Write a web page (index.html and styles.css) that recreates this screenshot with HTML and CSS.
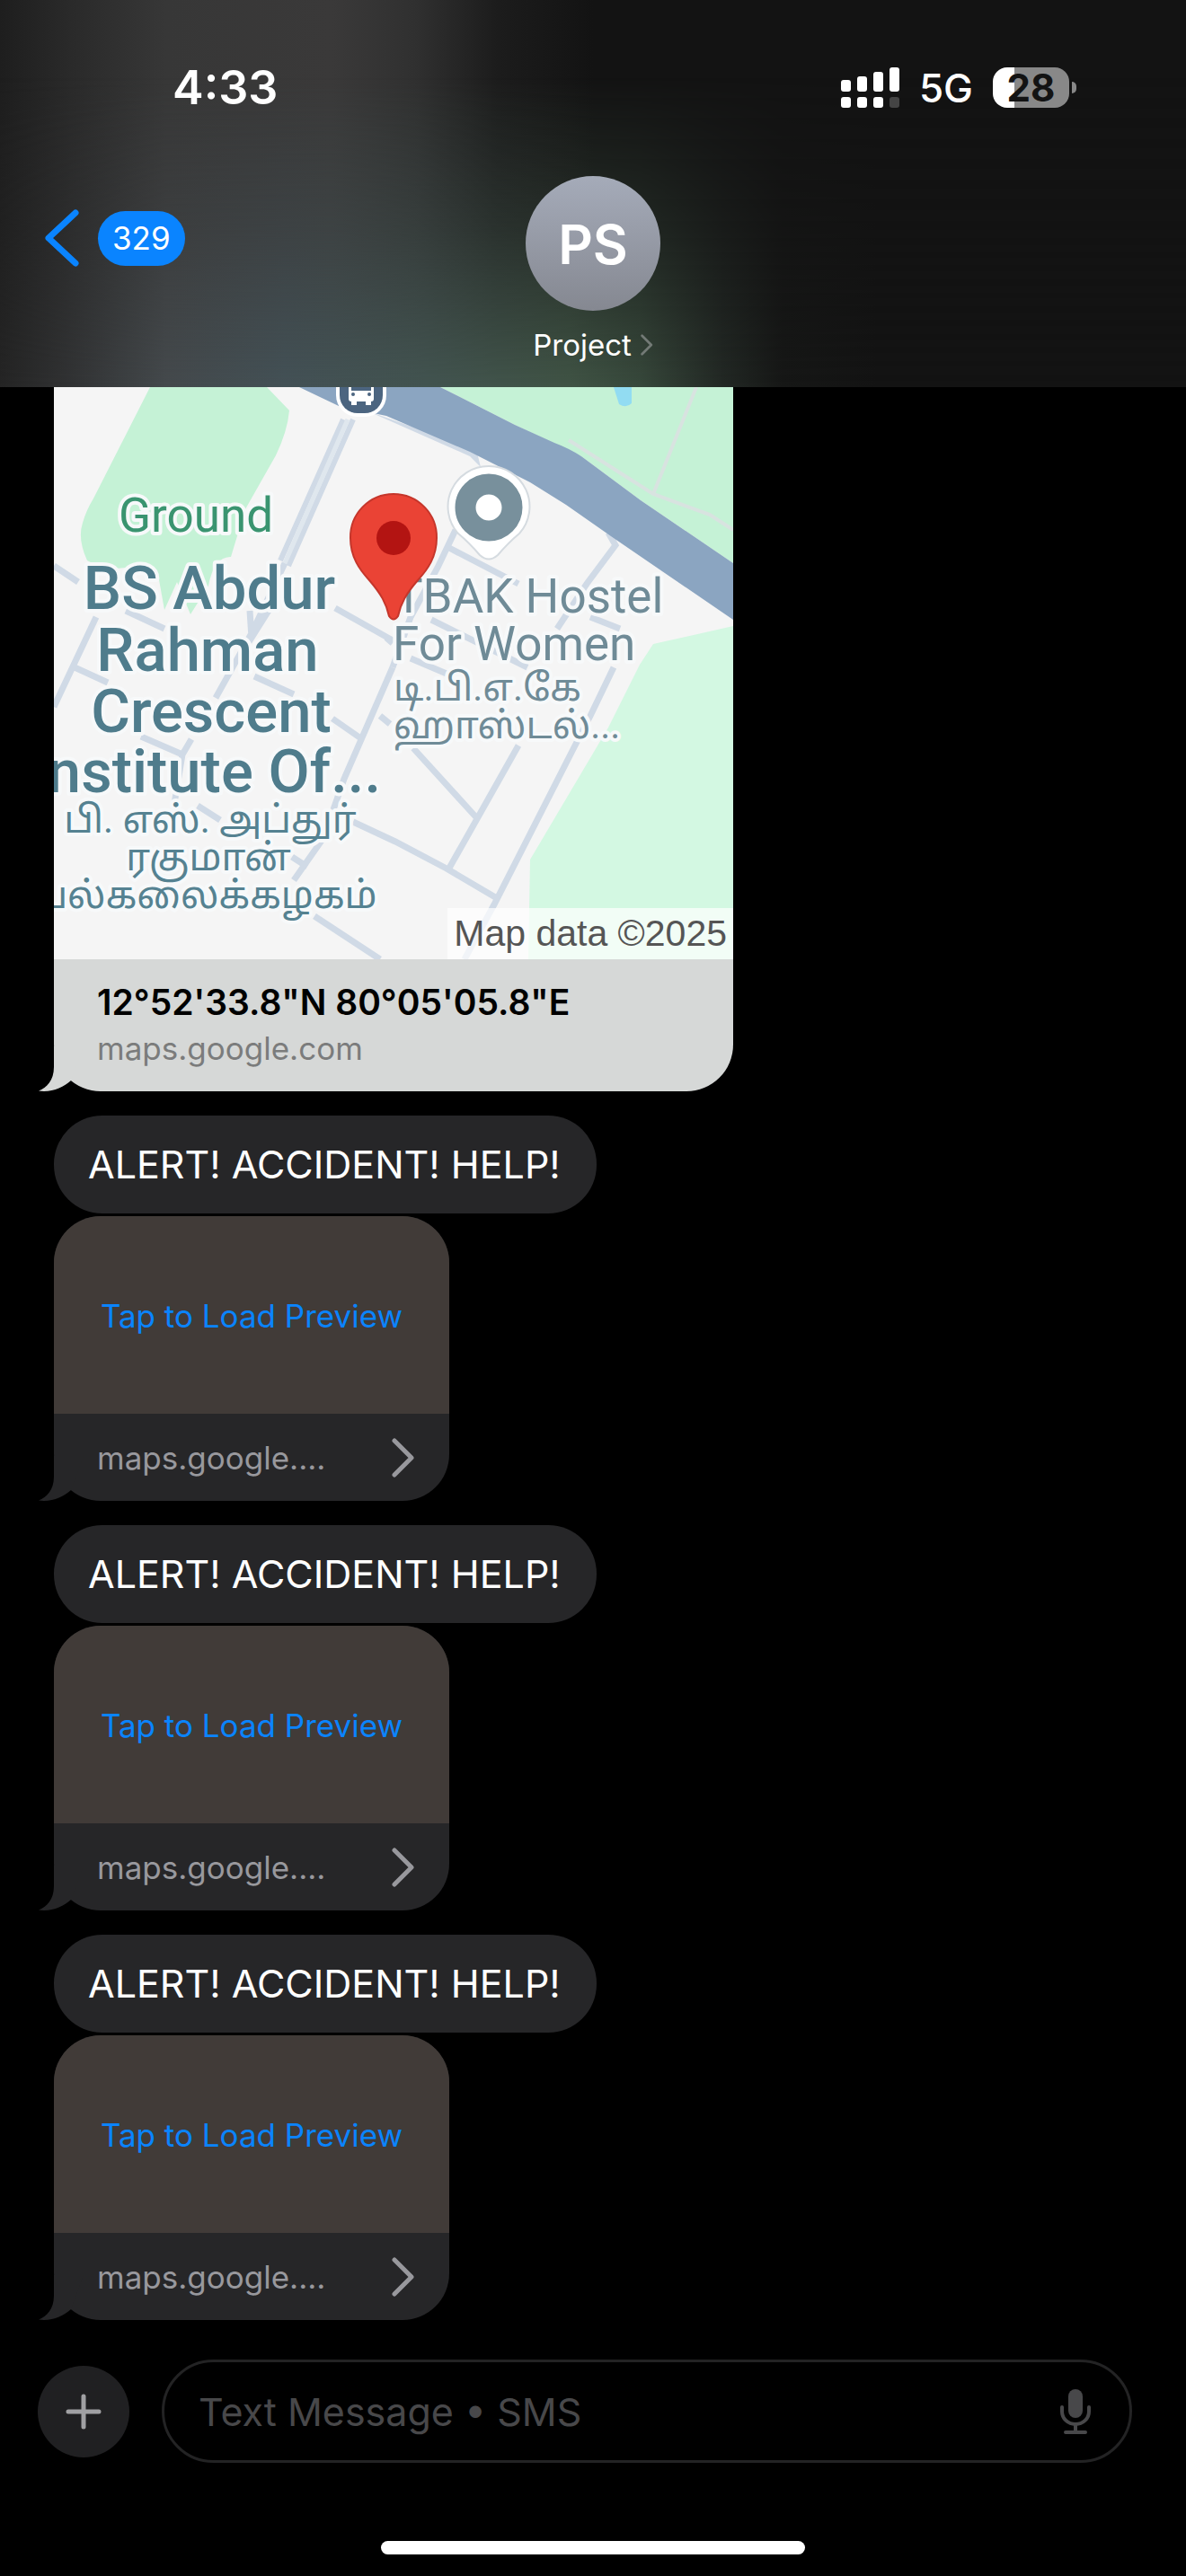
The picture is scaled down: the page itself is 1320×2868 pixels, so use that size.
FILE: index.html
```html
<!DOCTYPE html>
<html lang="en">
<head>
<meta charset="utf-8">
<meta name="viewport" content="width=device-width, initial-scale=1">
<title>Messages – Project</title>
<link rel="stylesheet" href="styles.css">
</head>
<body>
<svg class="defs" aria-hidden="true">
  <symbol id="tail" viewBox="0 0 50 50">
    <path d="M17 0V23C17 38 9 46 0 49.6C15 51.500 27 46 36 38L50 0Z"/>
  </symbol>
  <symbol id="chevron" viewBox="0 0 26 44">
    <path d="M3 3L22 22L3 41" fill="none" stroke="currentColor" stroke-width="5" stroke-linecap="round" stroke-linejoin="round"/>
  </symbol>
</svg>

<header class="top">
  <div class="status">
    <time class="clock">4:33</time>
    <div class="status-icons">
      <svg class="signal" viewBox="0 0 65 45" role="img" aria-label="Signal">
        <g fill="#fff">
          <rect x="0" y="14" width="11" height="13" rx="3"/>
          <rect x="18" y="10" width="11" height="17" rx="3"/>
          <rect x="36" y="5" width="11" height="22" rx="3"/>
          <rect x="54" y="0" width="11" height="27" rx="3"/>
          <rect x="0" y="33" width="11" height="12" rx="3"/>
          <rect x="18" y="33" width="11" height="12" rx="3"/>
          <rect x="36" y="33" width="11" height="12" rx="3"/>
        </g>
        <rect x="54" y="33" width="11" height="12" rx="3" fill="#444"/>
      </svg>
      <span class="network">5G</span>
      <div class="battery"><span class="battery-level">28</span></div>
    </div>
  </div>
  <nav class="nav">
    <button class="back" type="button" aria-label="Back, 329 unread">
      <svg class="back-arrow" viewBox="0 0 38 64"><path d="M34 4L4 32L34 60" fill="none" stroke="#0a84ff" stroke-width="7" stroke-linecap="round" stroke-linejoin="round"/></svg>
      <span class="badge">329</span>
    </button>
    <button class="contact" type="button">
      <span class="avatar">PS</span>
      <span class="contact-name">Project
        <svg class="name-arrow"><use href="#chevron"/></svg>
      </span>
    </button>
  </nav>
</header>

<main class="thread">
  <div class="message">
    <a class="card map-card" href="#map">
      <svg class="map" viewBox="60 431 756 637" role="img" aria-label="Map">
        <rect x="60" y="431" width="756" height="637" fill="#f5f5f5"/>
        <path fill="#c5f2d6" d="M167 431H297L322 457Q320 480 307 507L273 567L257 620Q238 620 232 652L212 684L197 648L183 679L176 640L150 630Q120 638 97 624Q86 600 92 582Q96 568 104 555Z"/>
        <path fill="#c5f2d6" d="M490 431H816V627L713 557L647 508L573 473Z"/>
        <path fill="#d3f8e2" d="M816 697L727 717L712 740L677 810L590 957L588 1068H816Z"/>
        <path fill="#92dcf2" d="M683 431H703V449Q697 455 689 450Z"/>
        <g fill="none" stroke="#d8e3e0" stroke-width="4">
          <path d="M775 431L727 550M633 490L680 520L727 550L790 573L816 590"/>
        </g>
        <g fill="none" stroke="#d0dae6" stroke-width="7">
          <path d="M382 467L312 624M393 467L321 630" stroke-width="6"/>
          <path d="M387 467L317 627" stroke="#dfe7ee" stroke-width="5"/>
          <path d="M317 627L280 705L240 777M278 680L280 710L304 672M213 823L203 840L157 820M203 840L194 895"/>
          <path d="M60 630L87 648M140 680L183 700M107 687L60 787M83 743L120 760M283 753L327 773M370 800L403 823"/>
          <path d="M373 677L437 713M437 743L383 867L360 933L327 980M325 954L342 965M423 797L434 806"/>
          <path d="M220 897L245 913M393 915L440 937L497 967L553 1000M350 1020L423 1068"/>
          <path d="M507 590L487 632L457 687L437 743M500 610L577 650M677 593L685 607L653 650L620 700"/>
          <path d="M480 690L587 743M457 733L497 750M430 710L437 716M657 687L690 700"/>
          <path d="M683 743L657 797L640 830L550 1007L517 1068M577 830L498 970M460 833L530 910"/>
        </g>
        <path fill="#d0dae6" d="M410 458L523 508L535 520L530 500ZM622 556L677 593L686 604V590Z"/>
        <path fill="#8ba5c1" d="M333 431H490L573 473L617 493Q633 499 647 508L713 557L816 627V690L680 597L630 562L590 537L523 503L430 463L377 452Z"/>

        <rect x="374" y="402" width="56" height="62" rx="24" fill="#fff"/>
        <rect x="378" y="402" width="48" height="58" rx="20" fill="#4c6580"/>
        <path fill="#fff" d="M388 423H416V444Q416 447 413 447V451H407V447H397V451H391V447Q388 447 388 444Z"/>
        <path fill="#4c6580" d="M391 427H413V435H391Z"/>
        <circle cx="393" cy="439" r="2" fill="#4c6580"/><circle cx="411" cy="439" r="2" fill="#4c6580"/>

        <path fill="#fff" stroke="#d5dbe0" stroke-width="2" d="M544 519A45 45 0 0 1 578 594Q566 604 554 618Q544 627 534 618Q522 604 510 594A45 45 0 0 1 544 519Z"/>
        <circle cx="544" cy="565" r="26" fill="none" stroke="#78909c" stroke-width="23"/>

        <g class="label place">
          <text x="439" y="682">TBAK Hostel</text>
          <text x="437" y="735">For Women</text>
          <text class="tamil" x="438" y="780">டி.பி.எ.கே</text>
          <text class="tamil" x="438" y="822">ஹாஸ்டல்...</text>
        </g>
        <text class="label ground" x="218" y="592">Ground</text>
        <g class="label campus">
          <text x="233" y="678">BS Abdur</text>
          <text x="231" y="747">Rahman</text>
          <text x="235" y="815">Crescent</text>
          <text x="229" y="882">Institute Of...</text>
        </g>
        <g class="label campus-local">
          <text x="234" y="927">பி. எஸ். அப்துர்</text>
          <text x="232" y="969">ரகுமான்</text>
          <text x="231" y="1011">பல்கலைக்கழகம்</text>
        </g>
        <path fill="#ea4335" stroke="#c5362b" stroke-width="2" d="M438 550A48 48 0 0 1 486 599C486 620 476 634 465 646C452 661 446 672 443 686Q438 693 433 686C430 672 424 661 411 646C400 634 390 620 390 599A48 48 0 0 1 438 550Z"/>
        <circle cx="438" cy="599" r="19" fill="#b31412"/>
        <rect x="498" y="1011" width="318" height="57" fill="#fff" opacity=".7"/>
        <text class="credit" x="809" y="1053">Map data ©2025</text>
      </svg>
      <span class="map-caption">
        <strong class="map-title">12°52'33.8"N 80°05'05.8"E</strong>
        <span class="map-host">maps.google.com</span>
      </span>
    </a>
    <svg class="tail tail-light"><use href="#tail"/></svg>
  </div>

  <section class="group">
    <p class="bubble">ALERT! ACCIDENT! HELP!</p>
    <div class="message">
      <div class="card link-card">
        <button class="load" type="button">Tap to Load Preview</button>
        <a class="link" href="#location-1">maps.google....<svg class="link-arrow"><use href="#chevron"/></svg></a>
      </div>
      <svg class="tail"><use href="#tail"/></svg>
    </div>
  </section>

  <section class="group">
    <p class="bubble">ALERT! ACCIDENT! HELP!</p>
    <div class="message">
      <div class="card link-card">
        <button class="load" type="button">Tap to Load Preview</button>
        <a class="link" href="#location-2">maps.google....<svg class="link-arrow"><use href="#chevron"/></svg></a>
      </div>
      <svg class="tail"><use href="#tail"/></svg>
    </div>
  </section>

  <section class="group">
    <p class="bubble">ALERT! ACCIDENT! HELP!</p>
    <div class="message">
      <div class="card link-card">
        <button class="load" type="button">Tap to Load Preview</button>
        <a class="link" href="#location-3">maps.google....<svg class="link-arrow"><use href="#chevron"/></svg></a>
      </div>
      <svg class="tail"><use href="#tail"/></svg>
    </div>
  </section>
</main>

<footer class="bottom">
  <form class="composer">
    <button class="add" type="button" aria-label="Add attachment">
      <svg class="plus" viewBox="0 0 40 40"><path d="M20 3V37M3 20H37" stroke="#a0a0a3" stroke-width="5" stroke-linecap="round"/></svg>
    </button>
    <div class="field">
      <input class="field-input" type="text" placeholder="Text Message • SMS" aria-label="Text Message">
      <button class="dictate" type="button" aria-label="Dictate">
        <svg class="mic" viewBox="0 0 36 50"><rect x="10" y="0" width="16" height="32" rx="8" fill="#48484a"/><path d="M3 20V25A15 14 0 0 0 33 25V20M18 39V47M7 48H29" fill="none" stroke="#48484a" stroke-width="4" stroke-linecap="round"/></svg>
      </button>
    </div>
  </form>
  <div class="home-bar"></div>
</footer>
</body>
</html>
```
FILE: styles.css
```css
* {
  box-sizing: border-box;
}

body {
  margin: 0;
  min-height: 100vh;
  display: flex;
  flex-direction: column;
  background: #000;
  color: #fff;
  font-family: Inter, "Liberation Sans", sans-serif;
  overflow-x: hidden;
}

button,
input {
  font: inherit;
  color: inherit;
  background: none;
  border: 0;
  margin: 0;
  padding: 0;
}

a {
  color: inherit;
  text-decoration: none;
}

.defs {
  position: absolute;
  width: 0;
  height: 0;
}

.top {
  position: relative;
  isolation: isolate;
  padding-bottom: 27px;
  background: linear-gradient(to right, #1e1e1e 0, #2a2a2a 6%, #373737 14%, #3a3939 28%, #303030 35%, #1c1c1c 42%, #131313 50%);
}

.top::before {
  content: "";
  position: absolute;
  inset: 0;
  z-index: -1;
  background: linear-gradient(to right, #242424 0, #2f3031 5%, #44494c 14%, #435156 24%, #425450 36%, #405445 48%, #37483b 54%, #222824 61%, #161716 66%, #131313 74%);
  mask-image: linear-gradient(to bottom, transparent 20%, rgb(0 0 0 / 40%) 60%, #000);
}

.status {
  display: flex;
  justify-content: space-between;
  align-items: center;
  height: 194px;
  padding: 0 122px 0 192px;
}

.clock {
  font-size: 52px;
  font-weight: 600;
}

.status-icons {
  display: flex;
  align-items: center;
}

.signal {
  width: 65px;
  height: 45px;
}

.network {
  margin: 2px 22px 0 22px;
  font-size: 44px;
  font-weight: 500;
}

.battery {
  position: relative;
  margin-right: 8px;
}

.battery::after {
  content: "";
  position: absolute;
  right: -8px;
  top: 16px;
  width: 5px;
  height: 13px;
  border-radius: 0 6px 6px 0;
  background: #888;
}

.battery-level {
  display: block;
  width: 85px;
  border-radius: 16px;
  background: linear-gradient(to right, #fff 28%, #888 28%);
  color: #131313;
  font-size: 42px;
  font-weight: 700;
  line-height: 45px;
  text-align: center;
}

.nav {
  display: grid;
  grid-template-columns: 1fr auto 1fr;
  align-items: start;
  padding: 2px 50px 0;
}

.back {
  display: flex;
  align-items: center;
  justify-self: start;
  gap: 21px;
  margin-top: 37px;
}

.back-arrow {
  width: 38px;
  height: 64px;
}

.badge {
  padding: 0 16px;
  border-radius: 31px;
  background: #0a84ff;
  font-size: 35px;
  line-height: 61px;
}

.contact {
  display: flex;
  flex-direction: column;
  align-items: center;
  gap: 18px;
}

.avatar {
  width: 150px;
  height: 150px;
  border-radius: 50%;
  background: linear-gradient(#a5abb9, #858891);
  font-size: 60px;
  font-weight: 600;
  line-height: 152px;
}

.contact-name {
  display: flex;
  align-items: center;
  gap: 10px;
  font-size: 33px;
  line-height: 40px;
}

.name-arrow {
  width: 14px;
  height: 24px;
  color: #737a76;
}

/* Thread */
.thread {
  display: flex;
  flex-direction: column;
  align-items: flex-start;
  gap: 27px;
  padding: 0 60px;
}

.message {
  position: relative;
  max-width: 100%;
}

.group {
  display: flex;
  flex-direction: column;
  align-items: flex-start;
  gap: 3px;
}

.bubble {
  margin: 0;
  padding: 27px 40px 28px 38px;
  border-radius: 54px;
  background: #262628;
  font-size: 43px;
  line-height: 54px;
}

.card {
  display: flex;
  flex-direction: column;
  max-width: 100%;
  overflow: hidden;
  border-radius: 52px;
}

.map-card {
  width: 756px;
  border-radius: 0 0 52px 52px;
  background: #d6d8d7;
}

.map {
  display: block;
  width: 100%;
}

.map-caption {
  display: flex;
  flex-direction: column;
  gap: 4px;
  padding: 23px 48px 26px;
  color: #000;
}

.map-title {
  font-size: 39px;
  font-weight: 600;
  line-height: 50px;
}

.map-host {
  color: #7b7c7c;
  font-size: 35px;
  line-height: 44px;
}

.link-card {
  width: 440px;
  background: #262628;
}

.load {
  height: 220px;
  padding-top: 2px;
  background: #413b38;
  color: #0a84ff;
  font-size: 35px;
}

.link {
  display: flex;
  justify-content: space-between;
  align-items: center;
  height: 97px;
  padding: 0 38px 0 48px;
  color: #98989d;
  font-size: 35px;
}

.link-arrow {
  width: 26px;
  height: 44px;
}

.tail {
  position: absolute;
  left: -17px;
  bottom: 0;
  width: 50px;
  height: 50px;
  fill: #262628;
}

.tail-light {
  fill: #d6d8d7;
}

/* Map lettering */
.label {
  font-family: Roboto, "Noto Sans", "Noto Sans Tamil", sans-serif;
  text-anchor: middle;
  paint-order: stroke;
  stroke: #f7f9fa;
  stroke-width: 8px;
  stroke-linejoin: round;
}

.ground {
  fill: #3a9470;
  font-size: 53px;
}

.campus {
  fill: #4f7c8c;
  font-size: 67px;
  font-weight: 500;
}

.campus-local {
  fill: #558291;
  font-size: 42px;
}

.place {
  fill: #6f8b97;
  font-size: 53px;
  text-anchor: start;
}

.tamil {
  font-size: 42px;
}

.credit {
  fill: #555;
  font-family: "Liberation Sans", sans-serif;
  font-size: 41px;
  text-anchor: end;
}

/* Composer */
.bottom {
  margin-top: 44px;
}

.composer {
  display: flex;
  align-items: center;
  gap: 36px;
  padding: 0 60px 0 42px;
}

.add {
  display: grid;
  place-items: center;
  width: 102px;
  height: 102px;
  border-radius: 50%;
  background: #202022;
}

.plus {
  width: 40px;
  height: 40px;
}

.field {
  display: flex;
  flex: 1;
  align-items: center;
  height: 115px;
  padding: 0 42px 0 38px;
  border: 3px solid #232324;
  border-radius: 58px;
}

.field-input {
  flex: 1;
  min-width: 0;
  outline: 0;
  font-size: 43px;
}

.field-input::placeholder {
  color: #48484a;
  opacity: 1;
}

.mic {
  display: block;
  width: 36px;
  height: 50px;
}

.home-bar {
  width: 472px;
  max-width: 60%;
  height: 15px;
  margin: 87px auto 24px;
  border-radius: 8px;
  background: #fff;
}
```
